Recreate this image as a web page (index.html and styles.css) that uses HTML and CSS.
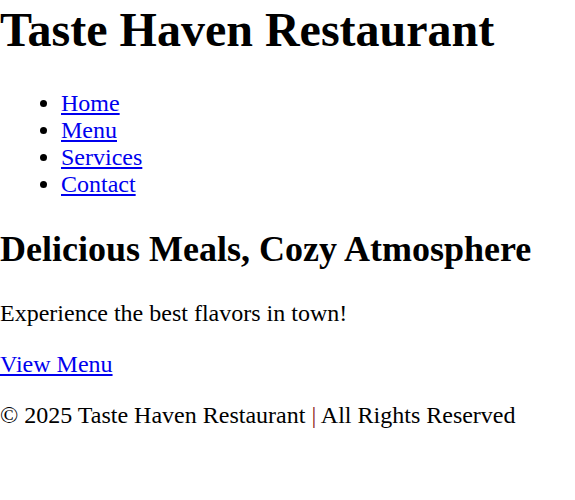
FILE: index.html
```html
<!DOCTYPE html>
<html>
<head>
<meta charset="utf-8">
<title>Taste Haven Restaurant</title>
<link rel="stylesheet" href="styles.css">
</head>
<body>
<header class="site-header">
<h1 class="site-title">Taste Haven Restaurant</h1>
<nav class="site-nav">
<ul class="nav-list">
<li><a href="#">Home</a></li>
<li><a href="#">Menu</a></li>
<li><a href="#">Services</a></li>
<li><a href="#">Contact</a></li>
</ul>
</nav>
</header>
<main class="hero">
<h2 class="hero-title">Delicious Meals, Cozy Atmosphere</h2>
<p class="hero-text">Experience the best flavors in town!</p>
<a class="hero-link" href="#">View Menu</a>
</main>
<footer class="site-footer">
<p class="footer-text">© 2025 Taste Haven Restaurant <span class="sep">|</span> All Rights Reserved</p>
</footer>
</body>
</html>
```
FILE: styles.css
```css
html {
  font-size: 24px;
}
body {
  margin: 0;
  font-family: "Liberation Serif", "Times New Roman", serif;
  font-size: 24px;
  color: #000;
}
.site-title {
  margin: 0;
  padding-top: 2px;
  font-size: 48px;
}
.nav-list {
  margin: 33px 0 24px;
  padding-left: 61px;
}
.hero-title {
  font-size: 36px;
  margin: 30px 0;
}
.hero-text {
  margin: 24px 0;
}
.hero-link {
  color: #0000ee;
}
.site-footer {
  margin: 0;
}
.footer-text {
  margin: 24px 0;
}
.sep {
  color: #8b1a1a;
}
```
